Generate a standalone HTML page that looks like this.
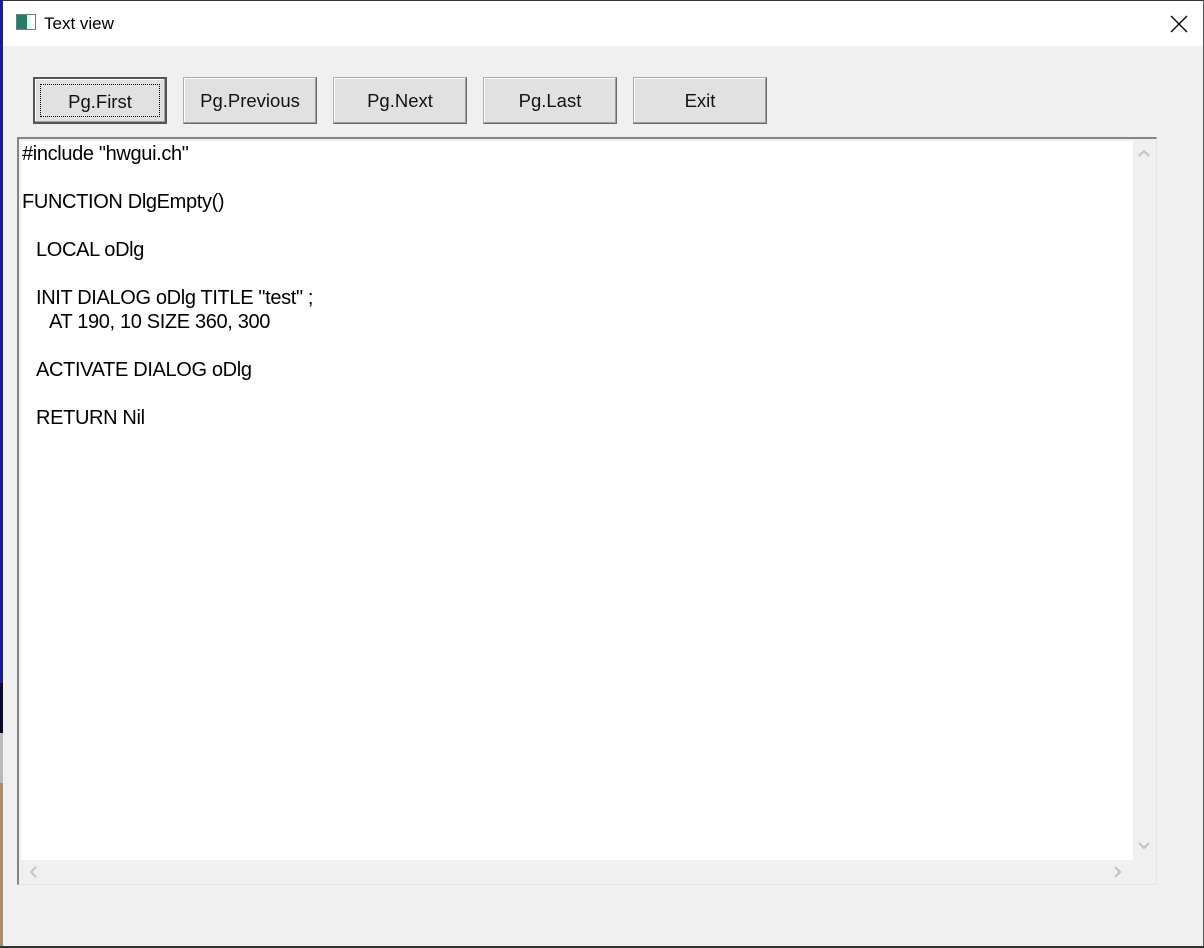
<!DOCTYPE html>
<html><head><style>
body{margin:0;width:1204px;height:948px;overflow:hidden;background:#f0f0f0;font-family:"Liberation Sans",Arial,sans-serif;position:relative}
.abs{position:absolute}
.btn{position:absolute;top:77px;width:134px;height:47px;box-sizing:border-box;background:#e1e1e1;border:1px solid #adadad;border-right-color:#6a6a6a;border-bottom-color:#6a6a6a;box-shadow:inset -1px -1px 0 #a0a0a0, inset 1px 1px 0 #fff;font-size:18.5px;color:#111;text-align:center;line-height:45px}
.ln{position:absolute;font-size:20px;letter-spacing:-0.35px;color:#000;white-space:pre;line-height:24px}
</style></head><body>
<div class="abs" style="left:0;top:0;width:1204px;height:1px;background:#333"></div>
<div class="abs" style="left:0;top:0;width:3px;height:683px;background:#1a1aa8"></div>
<div class="abs" style="left:0;top:683px;width:3px;height:50px;background:#0a0a30"></div>
<div class="abs" style="left:0;top:733px;width:3px;height:50px;background:#bbb"></div>
<div class="abs" style="left:0;top:783px;width:3px;height:165px;background:#b08a60"></div>
<div class="abs" style="left:1203px;top:0;width:1px;height:948px;background:#555"></div>
<div class="abs" style="left:0;top:946px;width:1204px;height:2px;background:#333"></div>
<div class="abs" style="left:3px;top:1px;width:1200px;height:45px;background:#fff"></div>
<div class="abs" style="left:16px;top:14px;width:20px;height:16px;border:1px solid #777;box-sizing:border-box;background:linear-gradient(90deg,#2a7a6a 0 55%,#cfe 55% 75%,#fff 75%)"></div>
<div class="abs" style="left:44px;top:14px;font-size:17px;color:#000">Text view</div>
<svg class="abs" style="left:1170px;top:15px" width="18" height="18"><path d="M1 1L17 17M17 1L1 17" stroke="#000" stroke-width="1.3"/></svg>

<div class="btn" style="left:33px;border:2px solid #555;box-shadow:inset -1px -1px 0 #a0a0a0, inset 1px 1px 0 #fff"><div style="position:absolute;left:5px;top:5px;right:5px;bottom:5px;border:1px dotted #000;line-height:33px">Pg.First</div></div>
<div class="btn" style="left:183px">Pg.Previous</div>
<div class="btn" style="left:333px">Pg.Next</div>
<div class="btn" style="left:483px">Pg.Last</div>
<div class="btn" style="left:633px">Exit</div>

<div class="abs" style="left:17px;top:137px;width:1140px;height:748px;box-sizing:border-box;border-top:2px solid #858585;border-left:2px solid #858585;border-right:1px solid #e3e3e3;border-bottom:1px solid #e3e3e3;background:#f0f0f0">
 <div class="abs" style="left:2px;top:2px;width:1112px;height:719px;background:#fff"></div>
 <div class="ln" style="left:3px;top:3px">#include "hwgui.ch"</div>
 <div class="ln" style="left:3px;top:51px">FUNCTION DlgEmpty()</div>
 <div class="ln" style="left:17px;top:99px">LOCAL oDlg</div>
 <div class="ln" style="left:17px;top:147px">INIT DIALOG oDlg TITLE "test" ;</div>
 <div class="ln" style="left:30px;top:171px">AT 190, 10 SIZE 360, 300</div>
 <div class="ln" style="left:17px;top:219px">ACTIVATE DIALOG oDlg</div>
 <div class="ln" style="left:17px;top:267px">RETURN Nil</div>
 <svg class="abs" style="left:1119px;top:10px" width="12" height="8"><path d="M1 7L6 2L11 7" stroke="#c2c2c2" stroke-width="2" fill="none"/></svg>
 <svg class="abs" style="left:1119px;top:703px" width="12" height="8"><path d="M1 1L6 6L11 1" stroke="#c2c2c2" stroke-width="2" fill="none"/></svg>
 <svg class="abs" style="left:10px;top:727px" width="8" height="12"><path d="M7 1L2 6L7 11" stroke="#c2c2c2" stroke-width="2" fill="none"/></svg>
 <svg class="abs" style="left:1095px;top:727px" width="8" height="12"><path d="M1 1L6 6L1 11" stroke="#c2c2c2" stroke-width="2" fill="none"/></svg>
</div>
</body></html>
